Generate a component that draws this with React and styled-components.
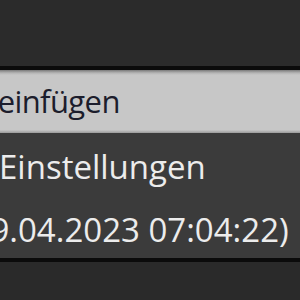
import React from "react"
import styled, { createGlobalStyle } from "styled-components"

const GlobalStyle = createGlobalStyle`
  html, body {
    margin: 0;
    padding: 0;
    background: #2a2a2a;
  }
  #root {
    width: 300px;
    height: 300px;
    overflow: hidden;
  }
`

const App = () => {
  return (
    <>
      <GlobalStyle />
      <Screen>
        <TopArea />
        <Divider />
        <Menu>
          <HighlightItem>
            <Label shift={-75}>Zeile einfügen</Label>
          </HighlightItem>
          <ItemGroup>
            <Item rowHeight={62}>
              <Label shift={-1}>Einstellungen</Label>
            </Item>
            <Item rowHeight={64}>
              <Label shift={-144}>(Stand: 19.04.2023 07:04:22)</Label>
            </Item>
          </ItemGroup>
        </Menu>
        <Divider />
        <BottomArea />
      </Screen>
    </>
  )
}

export default App

const Screen = styled.div`
  width: 300px;
  height: 300px;
  display: flex;
  flex-direction: column;
  background: #2a2a2a;
  overflow: hidden;
  font-family: "Open Sans", "Noto Sans", sans-serif;
`

const TopArea = styled.div`
  height: 66px;
  flex-shrink: 0;
  background: #2b2b2b;
`

const Divider = styled.div`
  height: 4px;
  flex-shrink: 0;
  background: #0b0b0b;
`

const BottomArea = styled.div`
  flex: 1;
  background: #2a2a2a;
`

const Menu = styled.div`
  display: flex;
  flex-direction: column;
  flex-shrink: 0;
`

const HighlightItem = styled.div`
  height: 63px;
  line-height: 63px;
  font-size: 31px;
  letter-spacing: -0.6px;
  color: #1c1d2c;
  background: linear-gradient(#7a7a7a 0px, #b5b5b5 3px, #c7c7c7 5px, #c7c7c7 60px, #9a9a9a 63px);
  overflow: hidden;
  white-space: nowrap;
`

const ItemGroup = styled.div`
  background: #3b3b3b;
  padding-top: 3px;
  height: 122px;
  overflow: hidden;
`

const Item = styled.div`
  height: ${(p) => p.rowHeight}px;
  line-height: ${(p) => p.rowHeight}px;
  font-size: 33px;
  color: #ececec;
  white-space: nowrap;
  overflow: hidden;
`

const Label = styled.span`
  display: inline-block;
  margin-left: ${(p) => p.shift}px;
`
